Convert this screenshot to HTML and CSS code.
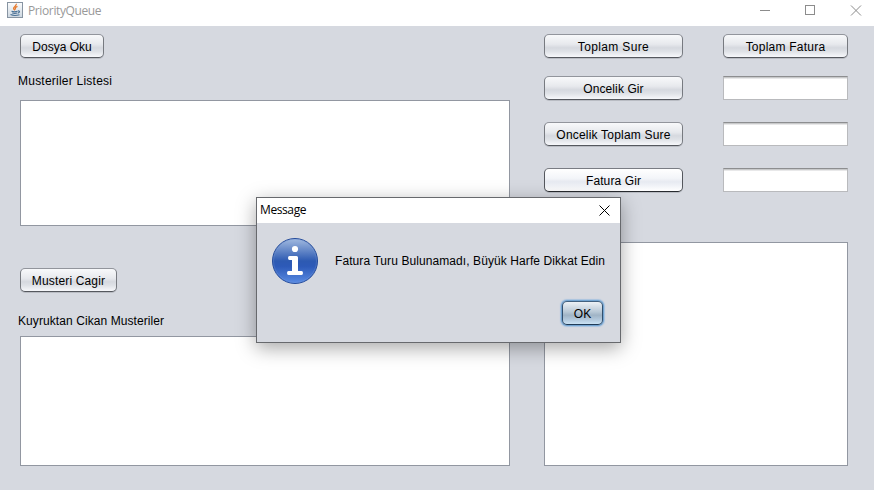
FILE: index.html
```html
<!DOCTYPE html>
<html lang="tr">
<head>
<meta charset="utf-8">
<title>PriorityQueue</title>
<link rel="stylesheet" href="styles.css">
</head>
<body>
<div class="window">
  <header class="titlebar">
    <svg class="java" width="16" height="16" viewBox="0 0 16 16">
      <defs><linearGradient id="jb" x1="0" y1="0" x2="0" y2="1"><stop offset="0" stop-color="#fbfcfd"/><stop offset="1" stop-color="#cdd7e0"/></linearGradient></defs>
      <rect x=".5" y=".5" width="15" height="15" fill="url(#jb)" stroke="#8794a2"/>
      <path d="M9.300 1.800C10 4 6 4.700 6.600 6.500Q6.800 7.300 8 8.300M10.500 4.300C8.500 5 7.700 6 8.700 7.400" fill="none" stroke="#e67a2e" stroke-width="1.300"/>
      <path d="M4.500 9.200Q7.500 10.200 10.500 9.200M5.200 11Q8 11.800 10 11M10.800 9Q13.200 8.600 12.300 10.200Q11.700 11 10.600 11.300M3.500 12.600Q7.500 14.200 12.500 12.700" fill="none" stroke="#4a7196" stroke-width="1.100"/>
    </svg>
    <span class="title">PriorityQueue</span>
    <svg class="controls" width="98" height="12" viewBox="0 0 98 12" fill="none" stroke="#8c8c8c">
      <path d="M0 5.500H10"/><rect x="45.500" y=".5" width="9" height="9"/><path d="M91 .5L101 10.500M101 .5L91 10.500"/>
    </svg>
  </header>
  <main class="content">
    <section class="left">
      <button class="btn read"><span>Dosya Oku</span></button>
      <label class="label list-label">Musteriler Listesi</label>
      <div class="area list"></div>
      <button class="btn call"><span>Musteri Cagir</span></button>
      <label class="label queue-label">Kuyruktan Cikan Musteriler</label>
      <div class="area queue"></div>
    </section>
    <section class="right">
      <div class="form">
        <button class="btn total-time"><span>Toplam Sure</span></button>
        <button class="btn total-bill"><span>Toplam Fatura</span></button>
        <button class="btn priority"><span>Oncelik Gir</span></button>
        <input class="field">
        <button class="btn priority-time"><span>Oncelik Toplam Sure</span></button>
        <input class="field">
        <button class="btn priority hover"><span>Fatura Gir</span></button>
        <input class="field">
      </div>
      <div class="area output"></div>
    </section>
  </main>
  <div class="dialog">
    <div class="dialog-title">
      <span>Message</span>
      <svg width="11" height="11" viewBox="0 0 11 11" stroke="#000"><path d="M.5 .5L10.500 10.500M10.500 .5L.5 10.500"/></svg>
    </div>
    <div class="dialog-body">
      <div class="message-row">
        <svg width="46" height="46" viewBox="0 0 46 46">
          <defs><linearGradient id="ib" x1="0" y1="0" x2="0" y2="1"><stop offset="0" stop-color="#a3bbe0"/><stop offset=".5" stop-color="#2d5ab2"/><stop offset=".62" stop-color="#2d5ab8"/><stop offset="1" stop-color="#5a8ce4"/></linearGradient></defs>
          <circle cx="23" cy="23" r="22.500" fill="url(#ib)" stroke="#234a9a"/>
          <circle cx="23" cy="23" r="21.500" fill="none" stroke="#7da0dc" stroke-opacity=".3"/>
          <circle cx="23" cy="11" r="3.100" fill="#fff"/>
          <path d="M17.500 18H24.500Q26 18 26 19.500V33H29.500Q31 33 31 35T29.500 37H16.500Q15 37 15 35T16.500 33H20V22H17.500Q16 22 16 20T17.500 18Z" fill="#fff"/>
        </svg>
        <span class="message">Fatura Turu Bulunamadı, Büyük Harfe Dikkat Edin</span>
      </div>
      <button class="btn ok"><span>OK</span></button>
    </div>
  </div>
</div>
</body>
</html>
```
FILE: styles.css
```css
* { box-sizing: border-box; }
body { margin: 0; font: 12px/16px "Liberation Sans", Arial, sans-serif; color: #000; }
.window { position: relative; width: 874px; height: 490px; background: #d6d9e0; overflow: hidden; }
.titlebar { display: flex; align-items: flex-start; height: 26px; padding: 2px 13px 0 7px; background: #fff; }
.title { margin-left: 5px; font: 12px/18px "Open Sans", "Noto Sans", sans-serif; letter-spacing: -.38px; color: #999; white-space: nowrap; }
.controls { margin: 3px 3px 0 auto; overflow: visible; }
.content { display: flex; gap: 34px; padding: 8px 26px 0 20px; }
.left { display: flex; flex-direction: column; align-items: flex-start; width: 490px; }
.right { width: 304px; }
.btn {
  display: flex; align-items: center; justify-content: center;
  height: 24px; padding: 1px 0 0; margin: 0;
  border: 1px solid; border-color: #92959c #777a80 #55585e;
  border-radius: 5px;
  background: linear-gradient(#f8f9fb 0%, #e7e9ed 42%, #d6d9df 58%, #dfe2e7 75%, #f7f8fb 100%);
  box-shadow: 0 1px 0 #b9bcc3;
  font: inherit; color: #000; white-space: nowrap;
}
.hover { border-color: #797c83 #54575d #282b30; background: linear-gradient(#fff 0%, #f3f5f9 42%, #e7eaf1 58%, #f0f2f7 75%, #fff 100%); }
.read { width: 84px; }
.call { width: 97px; margin-top: 42px; letter-spacing: .15px; }
.total-time { letter-spacing: .36px; }
.total-bill { letter-spacing: .23px; }
.priority { letter-spacing: .1px; }
.priority-time { letter-spacing: .2px; }
.label { margin-left: -2px; }
.list-label { margin-top: 15px; letter-spacing: .23px; }
.queue-label { margin-top: 21px; letter-spacing: .08px; }
.area { width: 100%; background: #fff; border: 1px solid #9297a1; }
.list { height: 126px; margin-top: 11px; }
.queue { height: 130px; margin-top: 7px; }
.output { height: 224px; margin-top: 50px; }
.form { display: grid; grid-template-columns: 139px 125px; grid-template-rows: 42px 46px 46px 24px; column-gap: 40px; align-items: start; }
.field {
  width: 125px; height: 24px; margin: 0; padding: 0; border: 1px solid #b9babd; border-top-color: #8d8e90;
  border-radius: 0; background: linear-gradient(#c8c9ca 0 1px, #e8e8e9 1px 2px, #fff 2px);
}
.dialog {
  position: absolute; left: 256px; top: 197px; width: 365px; height: 146px;
  border: 1px solid #67696d; background: #d6d9e0; box-shadow: 0 5px 18px rgba(0, 0, 0, .35);
}
.dialog-title { display: flex; justify-content: space-between; align-items: flex-start; height: 25px; padding: 3px 10px 0 3px; background: #fff; font: 12px/18px "Open Sans", "Noto Sans", sans-serif; letter-spacing: -.4px; }
.dialog-title svg { margin-top: 4px; }
.dialog-body { display: flex; flex-direction: column; padding: 15px 17px 0 15px; }
.message-row { display: flex; align-items: center; gap: 17px; height: 46px; }
.message-row svg { flex: none; }
.message { white-space: nowrap; letter-spacing: .085px; }
.ok {
  align-self: flex-end; width: 41px; margin-top: 17px;
  border-color: #42617f #314f6e #203b57;
  background: linear-gradient(#edf1f5 0%, #b8c8d6 45%, #a0b4c6 60%, #b2c8dc 80%, #cae2f4 100%);
  box-shadow: 0 0 0 1px #73a4d1, 0 0 1px 2px #a8c3df;
}
```
